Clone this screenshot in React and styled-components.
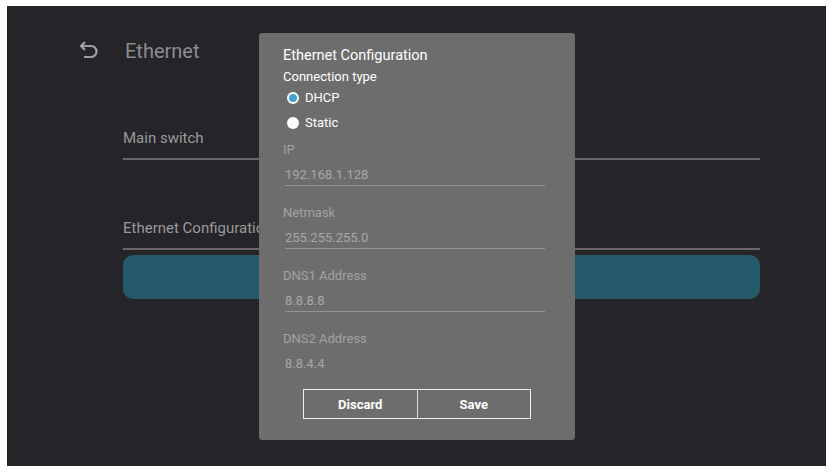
import React from 'react';
import styled, { createGlobalStyle } from 'styled-components';

const Global = createGlobalStyle`
  body { margin: 0; background: #fff; font-family: Roboto, "Liberation Sans", sans-serif; }
`;

const Frame = styled.div`
  padding: 6px 8px 6px 7px;
  width: 834px;
  height: 472px;
  box-sizing: border-box;
`;
const Screen = styled.div`
  position: relative;
  height: 100%;
  background: #252429;
  overflow: hidden;
`;
const Header = styled.div`
  display: flex;
  align-items: center;
  gap: 24px;
  padding: 30px 0 0 70px;
  height: 30px;
`;
const Title = styled.h1`
  margin: 0;
  font-size: 20px;
  font-weight: 400;
  color: #8c8c8f;
`;
const List = styled.div`
  padding: 52px 66px 0 116px;
  display: flex;
  flex-direction: column;
`;
const Item = styled.div`
  height: 40px;
  display: flex;
  align-items: center;
  margin-top: ${p => p.$top}px;
  font-size: 15px;
  color: #9a9a9c;
  border-bottom: 2px solid #68686a;
`;
const Bar = styled.div`
  margin-top: 5px;
  height: 44px;
  border-radius: 10px;
  background: #245a6a;
`;
const Dialog = styled.div`
  position: absolute;
  left: 252px;
  top: 27px;
  width: 316px;
  height: 407px;
  background: #6d6d6d;
  border-radius: 3px;
  box-sizing: border-box;
  padding: 14px 24px 0 24px;
  display: flex;
  flex-direction: column;
`;
const DTitle = styled.div`
  font-size: 14.5px;
  color: #fff;
  line-height: 18px;
`;
const Scroll = styled.div`
  height: 304px;
  overflow: hidden;
`;
const Label = styled.div`
  font-size: 13px;
  color: ${p => (p.$dim ? '#a3a3a3' : '#fff')};
  line-height: 16px;
  margin-top: ${p => p.$top || 0}px;
`;
const Radio = styled.div`
  display: flex;
  align-items: center;
  gap: 6px;
  height: 25px;
  padding-left: 4px;
  font-size: 13px;
  color: #fff;
`;
const Dot = styled.span`
  width: 12px;
  height: 12px;
  border-radius: 50%;
  background: #fff;
  box-sizing: border-box;
  border: ${p => (p.$on ? '2.5px solid #fff' : 'none')};
  ${p => p.$on && 'background: #3ba6d4;'}
`;
const Value = styled.div`
  margin: 9px 6px 0 2px;
  font-size: 13px;
  color: #a8a8a8;
  line-height: 16px;
  padding-bottom: 2px;
  border-bottom: 1px solid #939393;
`;
const Buttons = styled.div`
  display: flex;
  margin: 20px 0 0 20px;
  width: 226px;
  border: 1.5px solid #f0f0f0;
`;
const Btn = styled.div`
  flex: 1;
  height: 28px;
  display: flex;
  align-items: center;
  justify-content: center;
  font-size: 13px;
  font-weight: 700;
  color: #fff;
  & + & { border-left: 1.5px solid #ddd; }
`;

const fields = [
  ['IP', '192.168.1.128', 7],
  ['Netmask', '255.255.255.0', 19],
  ['DNS1 Address', '8.8.8.8', 19],
  ['DNS2 Address', '8.8.4.4', 19],
];

export default function App() {
  return (
    <Frame>
      <Global />
      <Screen>
        <Header>
          <svg width="24" height="24" viewBox="0 0 24 24" fill="none" stroke="#a0a0a2" strokeWidth="2.2">
            <path d="M8 3 L4 7 L8 11" />
            <path d="M4 7 H14 a5.5 5.5 0 0 1 0 11 H7" />
          </svg>
          <Title>Ethernet</Title>
        </Header>
        <List>
          <Item $top={0}>Main switch</Item>
          <Item $top={48}>Ethernet Configuration</Item>
          <Bar />
        </List>
        <Dialog>
          <DTitle>Ethernet Configuration</DTitle>
          <Scroll>
            <Label $top={4}>Connection type</Label>
            <Radio><Dot $on />DHCP</Radio>
            <Radio><Dot />Static</Radio>
            {fields.map(([l, v, t]) => (
              <div key={l}>
                <Label $dim $top={t}>{l}</Label>
                <Value>{v}</Value>
              </div>
            ))}
          </Scroll>
          <Buttons>
            <Btn>Discard</Btn>
            <Btn>Save</Btn>
          </Buttons>
        </Dialog>
      </Screen>
    </Frame>
  );
}
